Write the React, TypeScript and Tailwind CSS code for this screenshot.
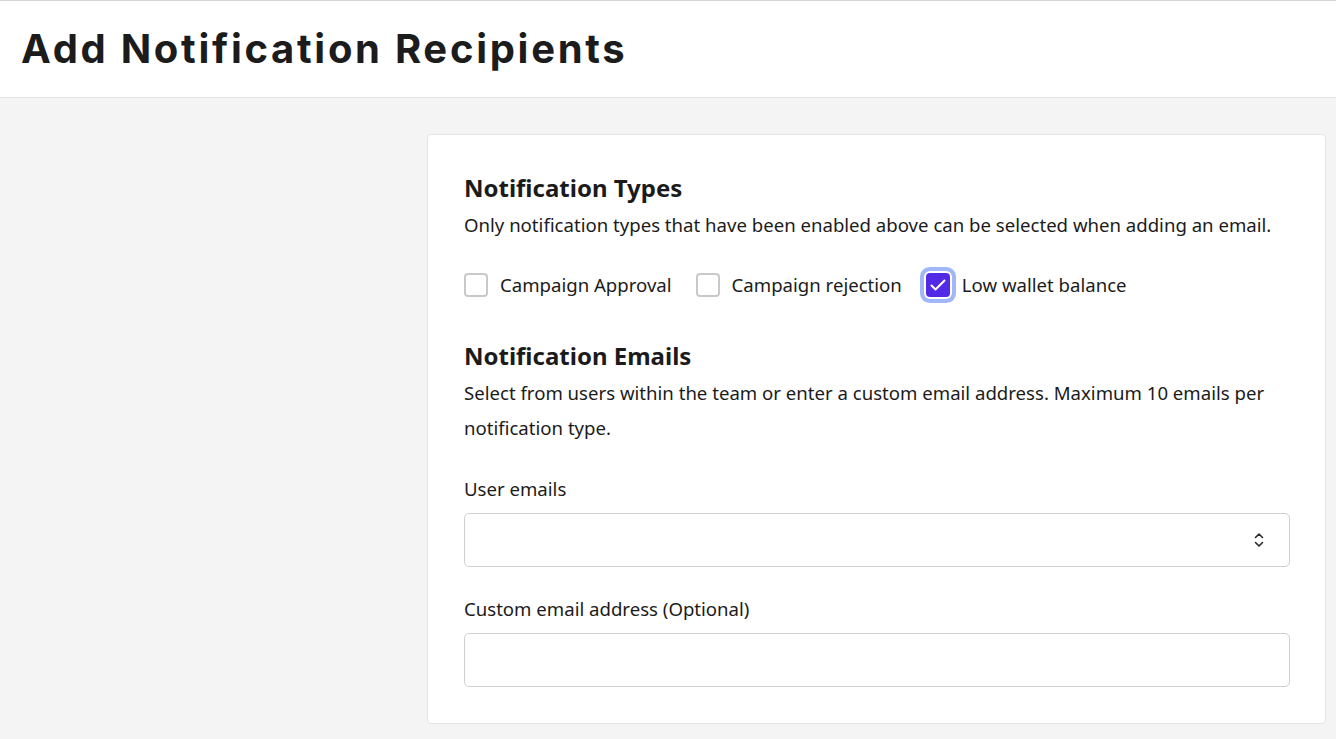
import { useState } from 'react';

const TYPES = [
  { id: 'approval', label: 'Campaign Approval' },
  { id: 'rejection', label: 'Campaign rejection' },
  { id: 'wallet', label: 'Low wallet balance' },
] as const;

const body = { fontFamily: '"Noto Sans", sans-serif' };

function Check({ checked, focused }: { checked: boolean; focused?: boolean }) {
  return (
    <span
      className={`flex items-center justify-center rounded-[4px] ${
        focused ? 'ring-[4px] ring-[#a0b7f9] ring-offset-2' : ''
      } ${checked ? 'w-[24px] h-[24px] bg-[#5229e5]' : 'w-[24px] h-[24px] border-2 border-[#c9c9c9] bg-white'}`}
    >
      {checked && (
        <svg width="18" height="18" viewBox="0 0 18 18" fill="none">
          <path d="M2.5 9.5l4 4L15.5 4.5" stroke="white" strokeWidth="2" strokeLinecap="round" strokeLinejoin="round" />
        </svg>
      )}
    </span>
  );
}

export default function App() {
  const [selected, setSelected] = useState<string[]>(['wallet']);

  const toggle = (id: string) =>
    setSelected((s) => (s.includes(id) ? s.filter((x) => x !== id) : [...s, id]));

  return (
    <div className="min-h-[739px] bg-[#f4f4f4] text-[#1b1b1b]" style={body}>
      {/* header */}
      <div className="h-[98px] bg-white border-t border-b border-t-[#d4d4d4] border-b-[#e2e2e2] flex items-center px-[21px]">
        <h1
          className="text-[40px] font-bold tracking-[2.7px] text-[#1c1c1c]"
          style={{ fontFamily: 'Inter, "Open Sans", sans-serif' }}
        >
          Add Notification Recipients
        </h1>
      </div>

      <div className="grid grid-cols-[427px_1fr] pr-[10px] pt-[36px] pb-[16px]">
        <div />
        <div className="bg-white border border-[#e4e4e4] rounded-[4px] pl-[36px] pr-[35px] pt-[37px] pb-[36px]">
          <h2 className="text-[24px] leading-[32px] font-bold">Notification Types</h2>
          <p className="text-[18.6px] leading-[36px] mt-[3px]">
            Only notification types that have been enabled above can be selected when adding an email.
          </p>

          <div className="flex items-center gap-[24px] mt-[26px] h-[32px]">
            {TYPES.map((t) => {
              const on = selected.includes(t.id);
              return (
                <label key={t.id} className="flex items-center gap-[12px] cursor-pointer" onClick={() => toggle(t.id)}>
                  <Check checked={on} focused={t.id === 'wallet'} />
                  <span className="text-[18.6px]">{t.label}</span>
                </label>
              );
            })}
          </div>

          <h2 className="text-[24px] leading-[32px] font-bold mt-[39px]">Notification Emails</h2>
          <p className="text-[18.6px] leading-[35px] mt-[3px]">
            Select from users within the team or enter a custom email address. Maximum 10 emails per notification type.
          </p>

          <div className="mt-[30px]">
            <div className="text-[18.6px] leading-[28px]">User emails</div>
            <div className="mt-[10px] h-[54px] border border-[#cfcfcf] rounded-[5px] flex items-center justify-end pr-[24px]">
              <svg width="12" height="18" viewBox="0 0 12 18" fill="none">
                <path d="M2.5 6.5L6 3l3.5 3.5M2.5 11.5L6 15l3.5-3.5" stroke="#2a2a2a" strokeWidth="1.6" strokeLinecap="round" strokeLinejoin="round" />
              </svg>
            </div>
          </div>

          <div className="mt-[28px]">
            <div className="text-[18.6px] leading-[28px]">Custom email address (Optional)</div>
            <input className="mt-[10px] w-full h-[54px] border border-[#cfcfcf] rounded-[5px] px-3 outline-none" />
          </div>
        </div>
      </div>
    </div>
  );
}
